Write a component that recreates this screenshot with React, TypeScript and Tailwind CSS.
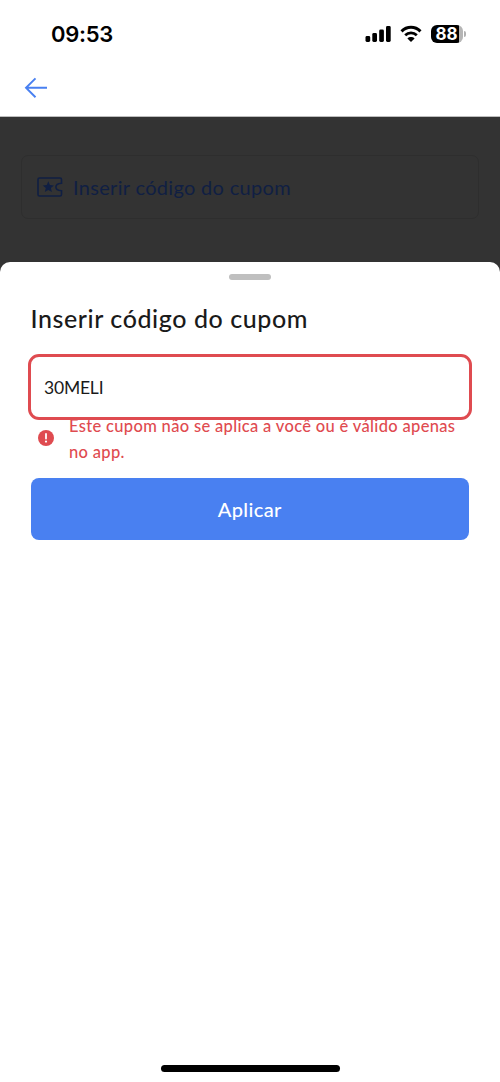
function StatusBar() {
    return (
        <div className="flex h-[60px] items-center justify-between pt-2 pl-[51px] pr-[34px]">
            <span className="font-['Inter'] text-[22px] leading-7 font-semibold tracking-[-0.3px] text-black">09:53</span>
            <div className="flex items-center">
                <svg width="26" height="18" viewBox="0 0 26 18" className="mr-[9px]">
                    <rect x="0.5" y="11" width="4.7" height="6" rx="1.4" />
                    <rect x="7.3" y="8" width="4.7" height="9" rx="1.4" />
                    <rect x="14.2" y="4.5" width="4.7" height="12.5" rx="1.4" />
                    <rect x="21" y="1" width="4.7" height="16" rx="1.4" />
                </svg>
                <svg width="22" height="18" viewBox="0 0 22 18" className="mr-[9px]" fill="none" stroke="#000">
                    <path d="M1.5 6.3C7 1 15 1 20.5 6.3" strokeWidth="3" />
                    <path d="M5.2 10.2C8.5 7.1 13.5 7.1 16.8 10.2" strokeWidth="2.8" />
                    <path d="M11 17L7.4 13.4C9.4 11.6 12.6 11.6 14.6 13.4Z" fill="#000" stroke="none" />
                </svg>
                <div className="flex h-[18px] w-[32px] items-center rounded-[6px] bg-[linear-gradient(90deg,#000_0_28px,#b5b5b5_28px)]">
                    <span className="w-[31px] text-center font-['Inter'] text-[17px] leading-[18px] font-bold text-white">88</span>
                </div>
                <span className="ml-px h-[6px] w-[2px] rounded-r-full bg-[#b0b0b0]" />
            </div>
        </div>
    );
}

function CouponIcon() {
    return (
        <svg width="26" height="20" viewBox="0 0 26 20" fill="none">
            <path
                d="M2.5 1H23Q24.5 1 24.5 2.5V6.2C20.6 6.4 18.9 8 18.9 10.1S20.6 13.6 24.5 13.8V17.5Q24.5 19 23 19H2.5Q1 19 1 17.5V2.5Q1 1 2.5 1Z"
                stroke="#101f43"
                strokeWidth="1.6"
            />
            <path
                d="M11.3 4.3L12.9 8.1L17 8.4L13.9 11.1L14.9 15.1L11.3 13L7.8 15.1L8.8 11.1L5.7 8.4L9.8 8.1Z"
                fill="#101f43"
            />
        </svg>
    );
}

function CouponSheet() {
    return (
        <main className="flex h-[820px] flex-col rounded-t-[10px] bg-white px-[28px]">
            <div className="mx-auto mt-[12px] h-[6px] w-[42px] shrink-0 rounded-full bg-[#bfbfbf]" />
            <h1 className="mt-[21px] ml-[2.5px] h-[34px] text-[25px] leading-[34px] font-medium tracking-[0.58px] whitespace-nowrap text-[#1a1a1a]">
                Inserir código do cupom
            </h1>
            <input
                type="text"
                defaultValue="30MELI"
                className="relative mt-[19px] h-[66px] w-[444px] rounded-[11px] border-3 border-[#df4b50] px-[13px] text-[17.5px] tracking-[-0.2px] text-[#1a1a1a] outline-none"
            />
            <div className="-mt-[7px] flex h-[52px] items-center pl-[10px]">
                <svg width="16" height="16" viewBox="0 0 16 16" className="mr-[15px] mb-[2px] shrink-0">
                    <circle cx="8" cy="8" r="8" fill="#df4b50" />
                    <path d="M8 4V8.5" stroke="#fff" strokeWidth="1.8" strokeLinecap="round" />
                    <circle cx="8" cy="11.6" r="1.1" fill="#fff" />
                </svg>
                <p className="text-[16.5px] leading-[26px] font-medium tracking-[0.33px] whitespace-nowrap text-[#df4b50]">
                    Este cupom não se aplica a você ou é válido apenas
                    <br />
                    no app.
                </p>
            </div>
            <button className="mt-[13px] ml-[2.5px] h-[62px] w-[438.5px] rounded-[8px] bg-[#4980f1] text-[20px] font-medium tracking-[0.4px] text-white">
                Aplicar
            </button>
            <div className="mx-auto mt-auto mb-[10px] h-[7px] w-[179px] rounded-full bg-black" />
        </main>
    );
}

export default function App() {
    return (
        <div className="h-[1082px] w-[500px] overflow-hidden bg-[#333333] font-['Lato','Liberation_Sans',sans-serif]">
            <header className="h-[117px] border-b border-[#bdbdbd] bg-white">
                <StatusBar />
                <svg width="24" height="22" viewBox="0 0 24 22" className="mt-[17px] ml-[24px]" fill="none" stroke="#4980f1" strokeWidth="1.9">
                    <path d="M23 10.8H2M11.5 1.4L2 10.8L11.5 20.2" />
                </svg>
            </header>
            <section className="h-[145px] px-[21px] pt-[38px]">
                <div className="flex h-[64px] items-center rounded-[7px] border border-[#2e2e2e] pl-[15px]">
                    <CouponIcon />
                    <span className="ml-[10px] text-[20px] leading-[28px] tracking-[0.32px] whitespace-nowrap text-[#101f43]">
                        Inserir código do cupom
                    </span>
                </div>
            </section>
            <CouponSheet />
        </div>
    );
}
